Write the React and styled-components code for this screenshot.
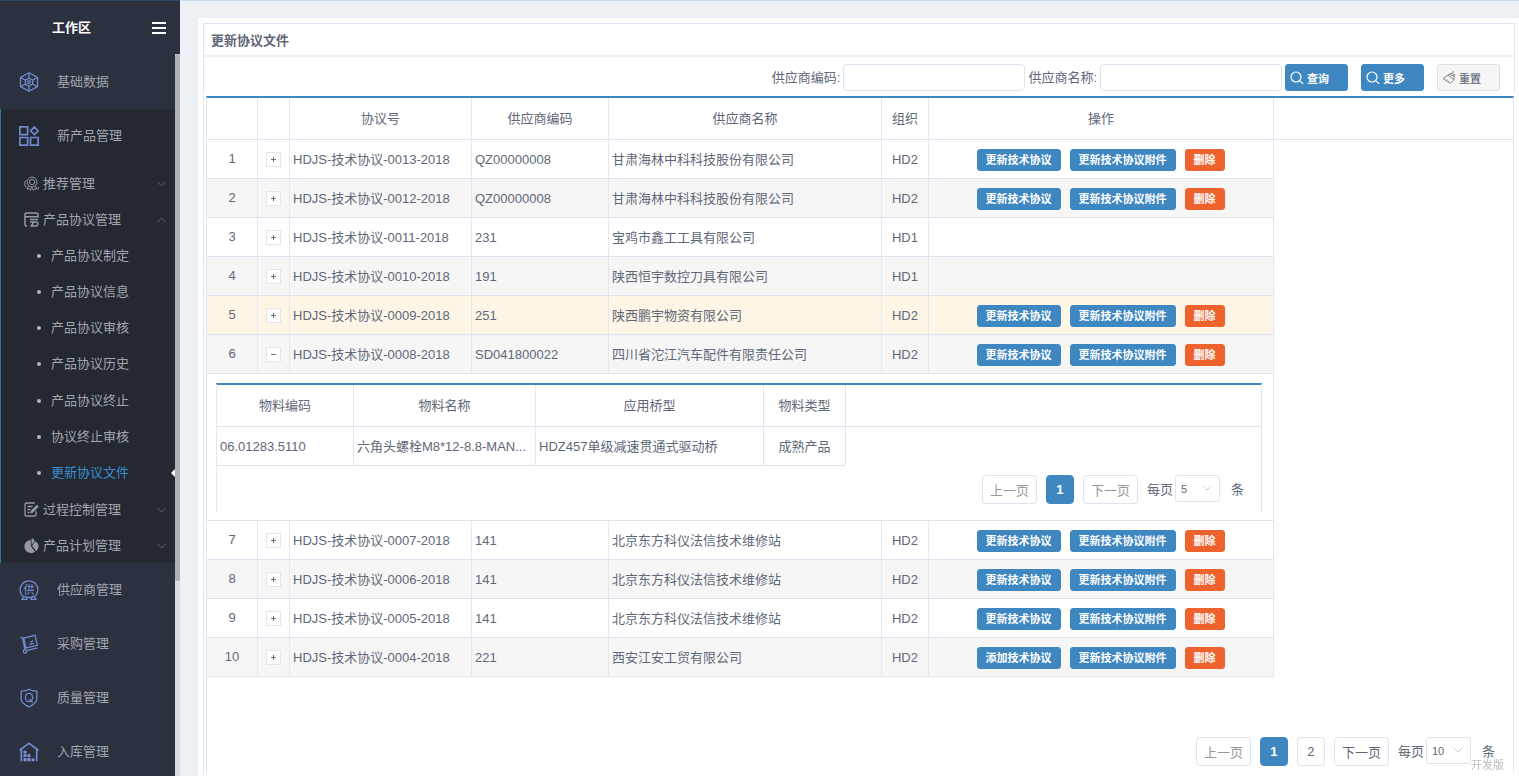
import { Fragment, useState } from "react";
import styled, { createGlobalStyle, css } from "styled-components";

const agreements = [
  { no: "HDJS-技术协议-0013-2018", code: "QZ00000008", name: "甘肃海林中科科技股份有限公司", org: "HD2", action: "更新技术协议" },
  { no: "HDJS-技术协议-0012-2018", code: "QZ00000008", name: "甘肃海林中科科技股份有限公司", org: "HD2", action: "更新技术协议" },
  { no: "HDJS-技术协议-0011-2018", code: "231", name: "宝鸡市鑫工工具有限公司", org: "HD1" },
  { no: "HDJS-技术协议-0010-2018", code: "191", name: "陕西恒宇数控刀具有限公司", org: "HD1" },
  { no: "HDJS-技术协议-0009-2018", code: "251", name: "陕西鹏宇物资有限公司", org: "HD2", action: "更新技术协议", active: true },
  { no: "HDJS-技术协议-0008-2018", code: "SD041800022", name: "四川省沱江汽车配件有限责任公司", org: "HD2", action: "更新技术协议" },
  { no: "HDJS-技术协议-0007-2018", code: "141", name: "北京东方科仪法信技术维修站", org: "HD2", action: "更新技术协议" },
  { no: "HDJS-技术协议-0006-2018", code: "141", name: "北京东方科仪法信技术维修站", org: "HD2", action: "更新技术协议" },
  { no: "HDJS-技术协议-0005-2018", code: "141", name: "北京东方科仪法信技术维修站", org: "HD2", action: "更新技术协议" },
  { no: "HDJS-技术协议-0004-2018", code: "221", name: "西安江安工贸有限公司", org: "HD2", action: "添加技术协议" },
];

const agreementPages = [
  "产品协议制定",
  "产品协议信息",
  "产品协议审核",
  "产品协议历史",
  "产品协议终止",
  "协议终止审核",
  "更新协议文件",
];

const App = () => {
  const [opened, setOpened] = useState(5);

  return (
    <>
      <GlobalStyle />
      <Layout>
        <Sidebar />
        <Main>
          <Panel>
            <PanelHead>
              <Title>更新协议文件</Title>
              <SearchBar />
            </PanelHead>
            <PanelBody>
              <GridBox>
                <Table>
                  <colgroup>
                    <Col $w={51} />
                    <Col $w={32} />
                    <Col $w={182} />
                    <Col $w={137} />
                    <Col $w={273} />
                    <Col $w={47} />
                    <Col $w={345} />
                    <col />
                  </colgroup>
                  <thead>
                    <tr>
                      <Th />
                      <Th />
                      <Th>协议号</Th>
                      <Th>供应商编码</Th>
                      <Th>供应商名称</Th>
                      <Th>组织</Th>
                      <Th>操作</Th>
                      <Th $last />
                    </tr>
                  </thead>
                  <tbody>
                    {agreements.map((row, i) => (
                      <Fragment key={row.no}>
                        <Row $even={i % 2 === 1} $active={row.active}>
                          <MarkTd>{i + 1}</MarkTd>
                          <MarkTd>
                            <Expand
                              type="button"
                              aria-expanded={opened === i}
                              aria-label={row.no}
                              onClick={() => setOpened(opened === i ? -1 : i)}
                            >
                              <svg width="5" height="5" viewBox="0 0 5 5" stroke="#6b727d">
                                <path d={opened === i ? "M0 2.5h5" : "M0 2.5h5M2.5 0v5"} />
                              </svg>
                            </Expand>
                          </MarkTd>
                          <Td>{row.no}</Td>
                          <Td>{row.code}</Td>
                          <Td>{row.name}</Td>
                          <Td $center>{row.org}</Td>
                          <Td>
                            {row.action && (
                              <Actions>
                                <Action type="button">{row.action}</Action>
                                <Action type="button">更新技术协议附件</Action>
                                <Action type="button" $danger>
                                  删除
                                </Action>
                              </Actions>
                            )}
                          </Td>
                        </Row>
                        {opened === i && (
                          <tr>
                            <DetailCell colSpan={7}>
                              <Materials />
                            </DetailCell>
                          </tr>
                        )}
                      </Fragment>
                    ))}
                  </tbody>
                </Table>
                <Footer>
                  <Pagination pages={[1, 2]} size="10" sizes={["10", "20", "50"]} />
                </Footer>
              </GridBox>
            </PanelBody>
          </Panel>
        </Main>
      </Layout>
      <Watermark>开发版</Watermark>
    </>
  );
};
export default App;

const Sidebar = () => (
  <Aside>
    <SideHead>
      <Workspace>工作区</Workspace>
      <MenuButton type="button" aria-label="菜单">
        <svg width="14" height="12" viewBox="0 0 14 12" fill="#fff">
          <path d="M0 0h14v2H0zM0 5h14v2H0zM0 10h14v2H0z" />
        </svg>
      </MenuButton>
    </SideHead>
    <SideBody>
      <Nav>
        <NavItem href="#">
          <HexIcon />
          基础数据
        </NavItem>
        <OpenGroup>
          <NavItem href="#">
            <AppsIcon />
            新产品管理
          </NavItem>
          <SubItem href="#">
            <BadgeIcon />
            推荐管理
            <Chevron />
          </SubItem>
          <SubItem href="#">
            <CardIcon />
            产品协议管理
            <Chevron $up />
          </SubItem>
          <PageList>
            {agreementPages.map((page) => (
              <PageRow key={page}>
                <PageLink href="#" $active={page === "更新协议文件"}>
                  {page}
                </PageLink>
              </PageRow>
            ))}
          </PageList>
          <SubItem href="#">
            <NoteIcon />
            过程控制管理
            <Chevron />
          </SubItem>
          <SubItem href="#">
            <PieIcon />
            产品计划管理
            <Chevron />
          </SubItem>
        </OpenGroup>
        <NavItem href="#">
          <SupplierIcon />
          供应商管理
        </NavItem>
        <NavItem href="#">
          <TrolleyIcon />
          采购管理
        </NavItem>
        <NavItem href="#">
          <ShieldIcon />
          质量管理
        </NavItem>
        <NavItem href="#">
          <StoreIcon />
          入库管理
        </NavItem>
      </Nav>
      <Track>
        <Thumb />
      </Track>
    </SideBody>
  </Aside>
);

const SearchBar = () => (
  <Toolbar>
    <label htmlFor="code">供应商编码:</label>
    <TextInput id="code" type="text" />
    <label htmlFor="name">供应商名称:</label>
    <TextInput id="name" type="text" />
    <ToolButtons>
      <ToolButton type="button">
        <SearchIcon />
        查询
      </ToolButton>
      <ToolButton type="button">
        <SearchIcon />
        更多
      </ToolButton>
      <ToolButton type="button" $plain>
        <BroomIcon />
        重置
      </ToolButton>
    </ToolButtons>
  </Toolbar>
);

const Materials = () => (
  <DetailBox>
    <Table>
      <colgroup>
        <Col $w={137} />
        <Col $w={182} />
        <Col $w={228} />
        <Col $w={82} />
        <col />
      </colgroup>
      <thead>
        <tr>
          <Th>物料编码</Th>
          <Th>物料名称</Th>
          <Th>应用桥型</Th>
          <Th>物料类型</Th>
          <Th $last />
        </tr>
      </thead>
      <tbody>
        <Row>
          <Td>06.01283.5110</Td>
          <Td>六角头螺栓M8*12-8.8-MAN...</Td>
          <Td>HDZ457单级减速贯通式驱动桥</Td>
          <Td $center>成熟产品</Td>
        </Row>
      </tbody>
    </Table>
    <DetailFooter>
      <Pagination pages={[1]} size="5" sizes={["5", "10"]} />
    </DetailFooter>
  </DetailBox>
);

const Pagination = ({ pages, size, sizes }) => (
  <Pager>
    <PageButton type="button" disabled>
      上一页
    </PageButton>
    {pages.map((page) => (
      <PageButton key={page} type="button" $current={page === 1}>
        {page}
      </PageButton>
    ))}
    <PageButton type="button" disabled={pages.length === 1}>
      下一页
    </PageButton>
    <PageSize>
      每页
      <SelectWrap>
        <Select defaultValue={size}>
          {sizes.map((s) => (
            <option key={s}>{s}</option>
          ))}
        </Select>
        <SelectArrow width="8" height="5" viewBox="0 0 8 5" fill="none" stroke="#c3c9d2">
          <path d="M.5.5 4 4 7.5.5" />
        </SelectArrow>
      </SelectWrap>
      <Unit>条</Unit>
    </PageSize>
  </Pager>
);

const Chevron = ({ $up }) => (
  <ChevronSvg width="9" height="6" viewBox="0 0 9 6" fill="none" stroke="#626873">
    <path d={$up ? "M.5 5 4.500 1l4 4" : "M.5 1l4 4 4-4"} />
  </ChevronSvg>
);

const HexIcon = () => (
  <NavIcon viewBox="0 0 20 20">
    <path d="M10 .8 18.500 5.400v9.200L10 19.200 1.500 14.600V5.400z" />
    <path d="M10 6.200l3.600 2v3.800L10 14l-3.600-2V8.200z" />
    <circle cx="10" cy="10" r="1.300" />
    <path d="M10 1v5M10 14v5M2 5.600l4.400 2.600M13.600 12l4.600 2.600M18 5.600l-4.400 2.600M6.400 12l-4.600 2.600" />
  </NavIcon>
);

const AppsIcon = () => (
  <NavIcon viewBox="0 0 20 20" $bold>
    <path d="M.9.9h7.700v7.700H.9zM.9 11.500h7.700v7.700H.9zM11.500 11.500h7.700v7.700h-7.700zM15.400 1l3.800 3.800-3.800 3.800-3.800-3.800z" />
  </NavIcon>
);

const SupplierIcon = () => (
  <NavIcon viewBox="0 0 20 20">
    <path d="M4.500 16.800a8.900 8.900 0 1 1 11 0M3 19.300l1.600-2.600h2.200l1 2.600zM17 19.300l-1.600-2.600h-2.200l-1 2.600zM7 17.500h6" />
    <text x="10" y="13.500" textAnchor="middle">
      供
    </text>
  </NavIcon>
);

const TrolleyIcon = () => (
  <NavIcon viewBox="0 0 20 20">
    <path d="M1.200 3.300l2.300.6 2.500 12M4.700 4.200l11.400-2.900 2.200 10L7 14zM7.500 16.600l11-2.800M10.500 10.400l4.400-1M11.500 8.500l2.700-2" />
    <circle cx="6" cy="17.300" r="1.700" />
  </NavIcon>
);

const ShieldIcon = () => (
  <NavIcon viewBox="0 0 20 20">
    <path d="M10 1.200c2.300 1.600 5 2 7.900 1.900v7.400c0 3.700-3 6.300-7.900 8.300-4.900-2-7.900-4.600-7.900-8.300V3.100c2.900.1 5.600-.3 7.900-1.900z" />
    <ellipse cx="10" cy="9.500" rx="3.600" ry="4.200" />
    <path d="M10.500 11l3.200 3.600" />
  </NavIcon>
);

const StoreIcon = () => (
  <NavIcon viewBox="0 0 20 20" $bold>
    <path d="M.6 8.200 10 1.400l9.400 6.800M2.300 7.500v11.800M17.700 7.500v11.800" />
    <path fill="#7c93d8" stroke="none" d="M4.500 8.700h3v2.700h-3zM4.500 12.300h3V15h-3zM8.400 12.300h3V15h-3zM4.500 16h3v3.300h-3zM8.400 16h3v3.300h-3zM12.500 16.500h3v2.800h-3z" />
  </NavIcon>
);

const BadgeIcon = () => (
  <SubIcon viewBox="0 0 15 15">
    <circle cx="8" cy="6" r="4.900" />
    <circle cx="8" cy="6" r="2.700" />
    <path d="M4.500 9.800 3 13l2.300-.3 1 1.700 1.500-3 1.700 3 1-1.700 2.400.3-1.500-3.200M1.500 4.500c-1.200 2.500-1 5 .5 7M14.500 11c.2 1.500-.2 2-1 2.500" />
  </SubIcon>
);

const CardIcon = () => (
  <SubIcon viewBox="0 0 15 15">
    <path strokeWidth="1.500" d="M3 14H2.200C1.300 14 1 13.600 1 12.800V2.200C1 1.400 1.400 1 2.200 1h10.600c.8 0 1.200.4 1.200 1.200v2.500H1M14 7.500H6M6 10h6.500c.8 0 1.300.4 1.300 1.500v.8c0 1.100-.6 1.700-1.500 1.700H6.500M9 10.500c0 1.500-1 3-2.500 3.500" />
  </SubIcon>
);

const NoteIcon = () => (
  <SubIcon viewBox="0 0 15 15">
    <path strokeWidth="1.300" d="M12 9v3.800c0 .7-.4 1.200-1.200 1.200H2.200C1.400 14 1 13.500 1 12.800V2.200C1 1.500 1.400 1 2.200 1h8.600M3.500 4.500h5M3.500 7.500h3M3.500 10.500h2" />
    <path fill="#9499a1" d="M12.800 3.300l1.400 1.300-5.500 5.700-2 .6.600-2z" />
  </SubIcon>
);

const PieIcon = () => (
  <SubIcon viewBox="0 0 15 15">
    <path
      fill="#9499a1"
      stroke="none"
      d="M6.800 1.900V8l4.200 5.700A6.400 6.400 0 0 1 7 15C3 15 .4 12 .4 8.500S3 2.200 6.800 1.900zM7.600.3c2 .2 3 1.500 2.900 3.300L7.600 7zM11.200 3.300c4 1.800 4.700 6.600.7 9.900L8.200 7.700z"
    />
  </SubIcon>
);

const SearchIcon = () => (
  <svg width="14" height="14" viewBox="0 0 14 14" fill="none" stroke="#fff" strokeWidth="1.200">
    <circle cx="6" cy="6" r="5" />
    <path d="M9.600 9.600l3.600 3.300" />
  </svg>
);

const BroomIcon = () => (
  <svg width="14" height="14" viewBox="0 0 14 14" fill="none" stroke="#888">
    <path d="M1 7.500 7 3.500l5 1.500v3.500L8.500 12.500zM7 3.500 9 2l4 2-1 1.500M10.500 2.500l1-2.500M6 4.200l5.500 4.500M4 9.700l1.500-1M6.300 11l1-1" />
  </svg>
);

const GlobalStyle = createGlobalStyle`
  * {
    box-sizing: border-box;
  }
  body {
    margin: 0;
    background: #edf0f5;
    color: #5f6878;
    font-family: "Liberation Sans", "Noto Sans CJK SC", sans-serif;
    font-size: 13px;
    line-height: 20px;
  }
  button, input, select {
    font-family: inherit;
    color: inherit;
  }
  a {
    color: inherit;
    text-decoration: none;
  }
`;

const Layout = styled.div`
  display: flex;
  height: 100vh;
`;

const Aside = styled.aside`
  display: flex;
  flex-direction: column;
  flex: none;
  width: 180px;
  border-top: 1px solid #2b4564;
  background: #2c3140;
  color: #a0a5af;
`;
const SideHead = styled.div`
  display: flex;
  flex: none;
  align-items: center;
  justify-content: space-between;
  height: 53px;
  padding: 0 14px 0 52px;
`;
const Workspace = styled.strong`
  color: #fff;
`;
const MenuButton = styled.button`
  display: flex;
  padding: 0;
  border: 0;
  background: none;
`;
const SideBody = styled.div`
  display: flex;
  flex: 1;
  min-height: 0;
`;
const Nav = styled.nav`
  flex: 1;
  padding-top: 1px;
  overflow: hidden;
`;
const Track = styled.div`
  width: 5px;
  background: #dddddf;
`;
const Thumb = styled.div`
  height: 73%;
  border-radius: 2px;
  background: #b1b0b0;
`;

const NavItem = styled.a`
  display: flex;
  align-items: center;
  gap: 18px;
  height: 54px;
  padding-left: 19px;
`;
const OpenGroup = styled.div`
  padding-bottom: 1px;
  background: #232831;
  box-shadow: inset 1px 0 #2e76ac;

  & > ${NavItem} {
    margin-bottom: 1px;
  }
`;
const SubItem = styled.a`
  display: flex;
  align-items: center;
  gap: 4px;
  height: 36px;
  padding: 3px 9px 0 24px;
`;
const PageList = styled.ul`
  display: flex;
  flex-direction: column;
  height: 254px;
  margin: 0;
  padding: 0;
  list-style: none;
`;
const PageRow = styled.li`
  display: flex;
  flex: 1;
`;
const PageLink = styled.a`
  display: flex;
  flex: 1;
  align-items: center;
  gap: 10px;
  padding: 3px 0 0 37px;
  color: ${({ $active }) => ($active ? "#3b8ccd" : "inherit")};

  &::before {
    content: "";
    width: 4px;
    height: 4px;
    border-radius: 50%;
    background: #b0b4bb;
  }
  ${({ $active }) =>
    $active &&
    css`
      &::after {
        content: "";
        margin-left: auto;
        border: 4px solid transparent;
        border-left-width: 0;
        border-right-color: #fff;
      }
    `}
`;
const NavIcon = styled.svg`
  flex: none;
  width: 20px;
  height: 20px;
  fill: none;
  stroke: #7088cc;
  stroke-width: ${({ $bold }) => ($bold ? "1.7" : "1.3")};

  text {
    fill: #7c93d8;
    stroke: none;
    font-size: 11px;
  }
`;
const SubIcon = styled.svg`
  flex: none;
  width: 15px;
  height: 15px;
  fill: none;
  stroke: #9499a1;
`;
const ChevronSvg = styled.svg`
  margin-left: auto;
`;

const Main = styled.main`
  display: flex;
  flex: 1;
  min-width: 0;
  padding: 17px 0 0 18px;
  border-top: 1px solid #cbdaea;
`;
const Panel = styled.section`
  display: flex;
  flex-direction: column;
  flex: 1;
  min-width: 0;
  padding: 5px 4px 0 5px;
  background: #fff;
`;
const PanelHead = styled.div`
  height: 70px;
  border: 1px solid #dfe4ee;
  border-bottom: 0;
`;
const Title = styled.h1`
  height: 33px;
  margin: 0;
  padding: 0 7px;
  border-bottom: 2px solid #edf0f5;
  font-size: 13px;
  line-height: 33px;
`;
const Toolbar = styled.div`
  display: flex;
  align-items: center;
  justify-content: flex-end;
  gap: 3px;
  padding: 7px 14px 0 0;
`;
const TextInput = styled.input`
  width: 182px;
  height: 27px;
  padding: 0 8px;
  border: 1px solid #dde4ef;
  border-radius: 4px;
  font-size: 13px;
`;
const ToolButtons = styled.div`
  display: flex;
  gap: 13px;
`;
const ToolButton = styled.button`
  display: flex;
  align-items: center;
  gap: 3px;
  width: 63px;
  height: 27px;
  padding: 0 4px;
  border: 1px solid ${({ $plain }) => ($plain ? "#dcdfe3" : "#3f87c1")};
  border-radius: 3px;
  background: ${({ $plain }) => ($plain ? "#f6f6f6" : "#3f87c1")};
  color: ${({ $plain }) => ($plain ? "#747c89" : "#fff")};
  font-size: 11px;
  font-weight: bold;
`;

const PanelBody = styled.div`
  display: flex;
  flex: 1;
  min-width: 0;
  margin-top: 2px;
  padding: 1px 1px 3px 2px;
  border-left: 1px solid #dfe4ee;
`;
const GridBox = styled.div`
  display: flex;
  flex-direction: column;
  flex: 1;
  min-width: 0;
  border: 1px solid #e1e8f2;
  border-top: 2px solid #3f87c1;
  border-bottom: 0;
`;
const Table = styled.table`
  width: 100%;
  table-layout: fixed;
  border-collapse: separate;
  border-spacing: 0;
`;
const Col = styled.col`
  width: ${({ $w }) => $w}px;
`;
const Th = styled.th`
  height: 42px;
  padding: 0 3px;
  border-right: ${({ $last }) => ($last ? "0" : "1px solid #e1e8f2")};
  border-bottom: 1px solid #dbe4ef;
  font-weight: normal;
`;
const Td = styled.td`
  height: 39px;
  padding: ${({ $center }) => ($center ? "2px 2px 0" : "2px 2px 0 3px")};
  overflow: hidden;
  border-right: 1px solid #e1e8f2;
  border-bottom: 1px solid #dbe4ef;
  text-align: ${({ $center }) => ($center ? "center" : "left")};
  text-overflow: ellipsis;
  white-space: nowrap;
`;
const MarkTd = styled(Td)`
  padding: 0 2px;
  text-align: center;
`;
const Row = styled.tr`
  background: ${({ $active, $even }) => ($active ? "#fdf5e6" : $even ? "#f6f6f6" : "#fff")};
`;
const Expand = styled.button`
  display: inline-flex;
  align-items: center;
  justify-content: center;
  width: 15px;
  height: 15px;
  padding: 0;
  border: 1px solid #e4e6e9;
  background: #fff;
  vertical-align: middle;
`;
const Actions = styled.div`
  display: flex;
  justify-content: center;
  gap: 9px;
  padding-right: 2px;
`;
const Action = styled.button`
  height: 22px;
  padding: 0 8px;
  border: 1px solid ${({ $danger }) => ($danger ? "#ee622e" : "#3f87c1")};
  border-radius: 3px;
  background: ${({ $danger }) => ($danger ? "#ee622e" : "#3f87c1")};
  color: #fff;
  font-size: 11px;
  font-weight: bold;
  line-height: 16px;
`;

const DetailCell = styled.td`
  padding: 9px 11px 8px 9px;
  border-right: 1px solid #e1e8f2;
  border-bottom: 1px solid #dfe1e5;
`;
const DetailBox = styled.div`
  border: 1px solid #e1e8f2;
  border-top: 2px solid #3f87c1;
  border-bottom: 0;
`;
const DetailFooter = styled.div`
  display: flex;
  justify-content: flex-end;
  padding: 9px 17px 8px;
`;
const Footer = styled.div`
  display: flex;
  justify-content: flex-end;
  margin-top: auto;
  padding: 0 18px 7px;
`;
const Pager = styled.div`
  display: flex;
  align-items: center;
  gap: 9px;
`;
const PageButton = styled.button`
  height: 29px;
  padding: 0 7px;
  min-width: 28px;
  border: 1px solid #dde4ef;
  border-radius: 4px;
  background: #fff;
  font-size: 13px;

  &:disabled {
    color: #999;
  }
  ${({ $current }) =>
    $current &&
    css`
      border-color: #3f87c1;
      background: #3f87c1;
      color: #fff;
      font-weight: bold;
    `}
`;
const PageSize = styled.label`
  display: flex;
  align-items: center;
  gap: 2px;
`;
const SelectWrap = styled.span`
  position: relative;
  display: flex;
  padding-bottom: 2px;
`;
const Select = styled.select`
  width: 45px;
  height: 27px;
  padding: 0 5px;
  border: 1px solid #dde4ef;
  border-radius: 3px;
  background: #fff;
  font-size: 11px;
  appearance: none;
`;
const SelectArrow = styled.svg`
  position: absolute;
  top: 11px;
  right: 9px;
  pointer-events: none;
`;
const Unit = styled.span`
  margin-left: 9px;
`;
const Watermark = styled.div`
  position: fixed;
  right: 15px;
  bottom: 1px;
  color: #b9bbbf;
  font-size: 11px;
`;
